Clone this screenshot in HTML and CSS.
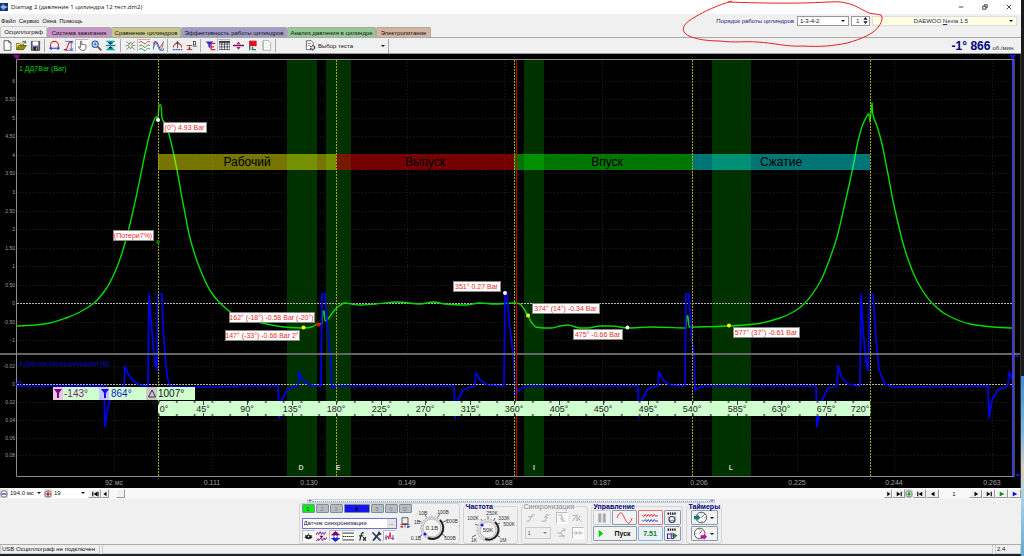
FILE: index.html
```html
<!DOCTYPE html>
<html lang="ru">
<head>
<meta charset="utf-8">
<title>Diamag 2</title>
<link rel="stylesheet" href="styles.css">
</head>
<body>
<div class="desktop">
<div class="app">
  <header class="titlebar">
    <svg class="logo" viewBox="0 0 16 16"><rect width="16" height="16" fill="#0a3480"/><path d="M1 8h14M4 5v6M6 2v12M8 4v9M10 6v5M12 7v2" stroke="#d5e8ff" stroke-width="1.4"/></svg>
    <span class="title">Diamag 2 (давление 1 цилиндра 12 тест.dm2)</span>
    <div class="winbtns">
      <button aria-label="Свернуть"><svg viewBox="0 0 8 8"><path d="M1 4h6"/></svg></button>
      <button aria-label="Окно"><svg viewBox="0 0 8 8"><path d="M1 3h4v4H1zM3 3V1h4v4H5"/></svg></button>
      <button aria-label="Закрыть"><svg viewBox="0 0 8 8"><path d="M1 1l6 6M7 1L1 7"/></svg></button>
    </div>
  </header>
  <div class="menubar">
    <nav class="menu"><button>Файл</button><button>Сервис</button><button>Окна</button><button>Помощь</button></nav>
    <div class="order">
      <label for="order">Порядок работы цилиндров</label>
      <div class="combo order-combo"><select id="order"><option>1-3-4-2</option></select></div>
      <div class="spin"><input id="cyl" value="1" aria-label="Номер цилиндра"><svg viewBox="0 0 6 10"><path d="M3 0l3 4H0zM3 10l3-4H0z"/></svg></div>
      <button class="car"><span>DAEWOO <u>N</u>exia 1.5</span><i class="caret"></i></button>
    </div>
  </div>
  <nav class="tabs">
    <button class="tab t1">Осциллограф</button><button class="tab t2">Система зажигания</button><button class="tab t3">Сравнение цилиндров</button><button class="tab t4">Эффективность работы цилиндров</button><button class="tab t5">Анализ давления в цилиндре</button><button class="tab t6">Электропитание</button>
  </nav>
  <div class="toolbar">
    <div class="tg">
      <button aria-label="Новый"><svg viewBox="0 0 16 16"><path d="M3 1h7l3 3v11H3zM10 1v3h3" fill="#fff" stroke="#222"/></svg></button>
      <button aria-label="Открыть"><svg viewBox="0 0 16 16"><path d="M1 14V5h4l1 1h5v3" fill="#ffe680" stroke="#4c4a00"/><path d="M1 14l3-6h11l-4 6z" fill="#998b00" stroke="#4c4a00"/><path d="M9 3q3-3 5 1M14 1v3h-3" fill="none" stroke="#222"/></svg></button>
      <button aria-label="Сохранить"><svg viewBox="0 0 16 16"><path d="M2 2h12v13H2z" fill="#7a78a8" stroke="#222"/><path d="M4 2h8v6H4z" fill="#fff"/><path d="M5 10h6v5H5z" fill="#222"/><path d="M9 11h1v3H9z" fill="#fff"/></svg></button>
    </div>
    <div class="tg">
      <button aria-label="Период"><svg viewBox="0 0 16 16"><path d="M2 11V8a6 6 0 0 1 12 0v3" fill="none" stroke="#e02020" stroke-width="1.5"/><path d="M1 12h14M4 10l-3 2 3 2M12 10l3 2-3 2" fill="none" stroke="#1030e0" stroke-width="1.4"/></svg></button>
      <button aria-label="Амплитуда"><svg viewBox="0 0 16 16"><path d="M1 14h4L9 3h5" fill="none" stroke="#e02020" stroke-width="1.5"/><path d="M12 3v11M10 5l2-3 2 3M10 12l2 3 2-3M3 2h12M3 15h12" fill="none" stroke="#3040c0"/></svg></button>
      <button class="on" aria-label="Рука"><svg viewBox="0 0 16 16"><path d="M5 10V2q1-1 2 0v5q1-1 2 0 1-1 2 0 2-1 2 1v4l-2 3H6L2 10q1-1 3 1z" fill="#fff" stroke="#333"/></svg></button>
      <button aria-label="Лупа"><svg viewBox="0 0 16 16"><circle cx="6" cy="6" r="4.5" fill="#bfe3ff" stroke="#2a5090" stroke-width="1.5"/><path d="M4 6h4M6 4v4" stroke="#1030e0"/><path d="M10 10l5 5" stroke="#705030" stroke-width="2.5"/></svg></button>
      <button aria-label="Сжать"><svg viewBox="0 0 16 16"><path d="M1 8h14" stroke="#008b8b" stroke-width="2"/><path d="M2 2h12M4 4h8M2 14h12M4 12h8" stroke="#00a5a5" stroke-width="2"/><path d="M8 7L5 4h6zM8 9l-3 3h6z" fill="#006"/></svg></button>
    </div>
    <div class="tg">
      <button aria-label="Маркер"><svg viewBox="0 0 16 16"><path d="M1 8h4l3-5 3 5h4M5 8l3 5 3-5" fill="none" stroke="#309030"/><path d="M2 2l4 4M14 2l-4 4M2 14l4-4M14 14l-4-4" stroke="#a04040"/></svg></button>
      <button class="on" aria-label="Каналы"><svg viewBox="0 0 16 16"><g fill="none" stroke-width="1.4"><path d="M0 4q3-4 6 0t5 0 5-1" stroke="#e03030"/><path d="M0 9q3-4 6 0t5 0 5-1" stroke="#309040"/><path d="M0 14q3-4 6 0t5 0 5-1" stroke="#30a060"/></g></svg></button>
      <button aria-label="Наложение"><svg viewBox="0 0 16 16"><g fill="none" stroke-width="1.4"><path d="M0 6q3-8 6 0t5 4 5-8" stroke="#e03030"/><path d="M0 14Q3-6 8 8t8 4" stroke="#3040e0"/><path d="M1 10q4-10 7 1t7-6" stroke="#609090"/></g></svg></button>
    </div>
    <div class="tg">
      <button aria-label="Авто"><svg viewBox="0 0 16 16"><path d="M2 11a6 6 0 1 1 12 0" fill="none" stroke="#d02030" stroke-width="1.5"/><path d="M8 2v10M5 5l3-3 3 3" fill="none" stroke="#222"/><path d="M1 14h14" stroke="#4060c0" stroke-width="2" stroke-dasharray="3 1"/></svg></button>
      <button aria-label="Ноль"><svg viewBox="0 0 16 16"><path d="M1 8h8M1 14h8" stroke="#c02020" stroke-width="1.3"/><path d="M5 9v4M3 11l2 2 2-2" fill="none" stroke="#222"/><rect x="11" y="2" width="3" height="5" fill="none" stroke="#222"/><path d="M10 9h6" stroke="#222"/></svg></button>
    </div>
    <div class="tg">
      <button aria-label="Фильтр"><svg viewBox="0 0 16 16"><path d="M1 2h11L8 7v5L5 10V7z" fill="#2030e0"/><path d="M15 5H9v9h6M9 10h4" fill="none" stroke="#e02030" stroke-width="1.7"/></svg></button>
      <button class="on" aria-label="Таблица"><svg viewBox="0 0 16 16"><path d="M0 2h16v12H0zM0 6h16M0 10h16M4 2v12M8 2v12M12 2v12" fill="#fff" stroke="#223"/><path d="M0 2h16v2H0z" fill="#223"/></svg></button>
      <button aria-label="Делитель"><svg viewBox="0 0 16 16"><path d="M0 8h16" stroke="#800060" stroke-width="2"/><path d="M8 2l3 4H5zM8 14l3-4H5z" fill="#903070"/></svg></button>
      <button aria-label="Флаг"><svg viewBox="0 0 16 16"><path d="M4 1v14" stroke="#333" stroke-width="1.5"/><path d="M4 1h10v8H4z" fill="#e01020"/><path d="M8 10v4h5" stroke="#208030" stroke-width="2" fill="none"/></svg></button>
      <button disabled aria-label="Отчёт"><svg viewBox="0 0 16 16"><path d="M3 1h8l3 3v11H3zM3 1v14" fill="#fff" stroke="#999"/><path d="M6 5h5M6 8h5M6 11h5" stroke="#bbb" stroke-dasharray="1 1"/></svg></button>
    </div>
    <button class="test"><svg viewBox="0 0 16 16"><path d="M2 1h7l3 3v10H2z" fill="#fff" stroke="#333"/><path d="M4 5h5M4 8h3" stroke="#555"/><circle cx="11" cy="11" r="3" fill="#ddd" stroke="#333" stroke-width="1.8" stroke-dasharray="2 1"/></svg><span>Выбор теста</span><i class="caret"></i></button>
    <div class="rpm"><b>-1° 866</b><span>об./мин.</span></div>
  </div>

  <svg class="chart" viewBox="0 54 1021 434" role="img" aria-label="Осциллограмма давления">
    <rect y="54" width="1021" height="434" fill="#000"/>
    <g fill="#003200"><path d="M287 60h30v416h-30zM326 60h25v416h-25zM524 60h20v416h-20zM712 60h39v416h-39z"/></g>
    <g id="grid" class="grid"></g>
    <path d="M17 303.500H1013M17 384.500H1013" class="zero"/>
    <path id="green" class="wave green"/>
    <g class="strokes">
      <path d="M158 154h178v16H158z" fill="#ff0"/><path d="M336 154h178v16H336z" fill="#f00"/><path d="M514 154h178v16H514z" fill="#0f0"/><path d="M692 154h178v16H692z" fill="#0ff"/>
    </g>
    <g class="stroke-names"><text x="247" y="166">Рабочий</text><text x="425" y="166">Выпуск</text><text x="607" y="166">Впуск</text><text x="781" y="166">Сжатие</text></g>
    <path id="blue" class="wave blue"/>
    <path d="M0 354H1020" stroke="#666" stroke-width="2"/>
    <path d="M158.500 60V476M336.500 60V476M514.500 60V476M692.500 60V476M870.500 60V476" class="phase"/>
    <path d="M516.500 60V476" stroke="#c80000"/>
    <path d="M16.500 476.500V59.500H1014M16.500 476.500H1014V59" fill="none" stroke="#8c8c8c"/>
    <path d="M1013 60V476" stroke="#3c3cd2" stroke-width="2"/>
    <path d="M1020.500 54V488" stroke="#333"/>
    <path d="M13 55h7l-3 5z" fill="#900090"/><path d="M1009 55h7l-3 5zM1015 357l2-3 2 3zM1015 474h5l-2 3z" fill="#1010f0"/>
    <circle cx="19" cy="384" r="2.500" fill="none" stroke="#1010f0"/>
    <text x="19" y="71" class="ch" fill="#00d000">1 ДД7Bar (Bar)</text>
    <text x="19" y="366" class="ch" fill="#0000c8">4 Датчик синхронизации (В)</text>
    <g id="ylabels" class="ylab"></g>
    <g id="xlabels" class="xlab"></g>
    <g class="events"><text x="301" y="470">D</text><text x="338" y="470">E</text><text x="534" y="470">I</text><text x="731" y="470">L</text></g>
    <rect x="158" y="401" width="712" height="15" fill="#cfffcf"/>
    <path d="M158 402H870M158 415H870" pathLength="720" class="ticks"/>
    <path id="majors" class="majors"/>
    <g id="degrees" class="deg"></g>
    <g class="cursor">
      <path d="M53 387h142v13H53z" fill="#cfffcf"/><path d="M53 387h10v13H53z" fill="#e6c8e6"/><path d="M99 387h10v13H99z" fill="#c8c8ff"/><path d="M146 387h11v13h-11z" fill="#c8c8c8"/>
      <path d="M54 389h8l-3 4v5h-2v-5z" fill="#800080"/><path d="M101 389h8l-3 4v5h-2v-5z" fill="#1010f0"/><path d="M152 390l3.500 7h-7z" fill="none" stroke="#333"/>
      <text x="64" y="397" fill="#802080">-143°</text><text x="111" y="397" fill="#1818d8">864°</text><text x="158" y="397" fill="#111">1007°</text>
    </g>
    <g id="callouts" class="callouts"></g>
    <g><circle cx="158" cy="120" r="2" fill="#fff"/><circle cx="158" cy="242" r="2" fill="#007800"/><circle cx="303.500" cy="327.500" r="2" fill="#ff0"/><circle cx="318.500" cy="324.500" r="2" fill="#f00"/><circle cx="505" cy="293" r="2" fill="#fff"/><circle cx="528" cy="315.500" r="2" fill="#ff0"/><circle cx="627.500" cy="327.500" r="2" fill="#fff"/><circle cx="729" cy="325.500" r="2" fill="#ff0"/></g>
  </svg>

  <div class="navstrip">
    <button class="round" aria-label="Уменьшить"><svg viewBox="0 0 10 10"><circle cx="5" cy="5" r="4" fill="#fff" stroke="#555"/><path d="M2 5h6" stroke="#22b" stroke-width="1.500"/></svg></button>
    <div class="combo w36"><select aria-label="Развёртка"><option>194.0 мс</option></select></div>
    <button class="round" aria-label="Увеличить"><svg viewBox="0 0 10 10"><circle cx="5" cy="5" r="4" fill="#fff" stroke="#555"/><path d="M2 5h6M5 2v6" stroke="#a00" stroke-width="1.500"/></svg></button>
    <div class="combo w36"><select aria-label="Кадр"><option>19</option></select></div>
    <button class="nb" aria-label="В начало"><svg viewBox="0 0 10 8"><path d="M2 1v6M9 1v6" stroke="#000" stroke-width="1.500"/><path d="M8 1v6L3 4z"/></svg></button>
    <button class="nb small" aria-label="Назад"><svg viewBox="0 0 10 8"><path d="M7 1v6L3 4z"/></svg></button>
    <div class="track"><button class="thumb" aria-label="Прокрутка"></button></div>
    <button class="nb small" aria-label="Вперёд"><svg viewBox="0 0 10 8"><path d="M4 1v6l4-3z"/></svg></button>
    <button class="nb" aria-label="В конец"><svg viewBox="0 0 10 8"><path d="M8 1v6" stroke="#000" stroke-width="1.500"/><path d="M2 1v6l5-3z"/></svg></button>
    <button class="round" aria-label="Добавить"><svg viewBox="0 0 10 10"><circle cx="5" cy="5" r="4" fill="#fff" stroke="#666"/><path d="M2 5h6M5 2v6" stroke="#080" stroke-width="1.500"/></svg></button>
    <button class="nb" aria-label="Первый"><svg viewBox="0 0 10 8"><path d="M2 1v6" stroke="#000" stroke-width="1.500"/><path d="M8 1v6L3 4z"/></svg></button>
    <button class="nb" aria-label="Предыдущий"><svg viewBox="0 0 10 8"><path d="M7 1v6L2 4z"/></svg></button>
    <output class="page">1</output>
    <button class="nb" aria-label="Следующий"><svg viewBox="0 0 10 8"><path d="M3 1v6l5-3z"/></svg></button>
    <button class="nb" aria-label="Последний"><svg viewBox="0 0 10 8"><path d="M8 1v6" stroke="#000" stroke-width="1.500"/><path d="M2 1v6l5-3z"/></svg></button>
    <button class="nb" aria-label="Пуск"><svg viewBox="0 0 10 8"><path d="M2 1v6l6-3z" fill="#080"/></svg></button>
    <button class="nb" aria-label="Пуск 2"><svg viewBox="0 0 10 8"><path d="M2 1v6l6-3z" fill="#00f"/></svg></button>
  </div>

  <main class="panel">
    <div class="slider"><i></i><span></span><i></i></div>
    <div class="groups">
      <section class="group channels">
        <div class="chan-left">
          <div class="chtabs"><button class="c1">1</button><button>2</button><button>3</button><button class="c4">4</button><button>5</button><button>6</button><button>D</button></div>
          <div class="sensor"><div class="sensor-box"><input value="Датчик синхронизации" aria-label="Датчик"><button aria-label="Выбрать">...</button></div>
            <svg class="ic" viewBox="0 0 16 16"><path d="M4 1h8v8H4z" fill="#eee" stroke="#333"/><path d="M2 10h12M8 9v5" stroke="#333"/><path d="M5 11l-4 2 4 2z" fill="#e02020"/><path d="M11 11l4 2-4 2z" fill="#1030e0"/></svg></div>
          <div class="icons">
            <button class="on" aria-label="Видимость"><svg viewBox="0 0 16 16"><path d="M2 9q6-8 12 0-6 6-12 0" fill="#222"/><circle cx="8" cy="8" r="1.200" fill="#fff"/><path d="M3 6l2 1M13 6l-2 1M8 3v2" stroke="#222"/></svg></button>
            <button aria-label="Фильтр"><svg viewBox="0 0 16 16"><path d="M0 6l2-4 2 3 2-4 2 4 2-3 2 3 2-4M0 15l3-4 1 3 4-5 1 5 3-4 1 3 3-4" fill="none" stroke="#902090" stroke-width="1.400"/><path d="M5 7h6L8 10z" fill="#225"/></svg></button>
            <button class="on" aria-label="Масштаб"><svg viewBox="0 0 16 16"><path d="M8 0l7 6h-4v2H5V6H1z" fill="#800070"/><path d="M8 16l-7-6h4V8h6v2h4z" fill="#2020e0"/><circle cx="8" cy="8" r="2" fill="#fff"/></svg></button>
            <button class="on" aria-label="Линии"><svg viewBox="0 0 16 16"><path d="M0 3h16M0 13h16" stroke="#222" stroke-width="1.300"/><path d="M0 8h16" stroke="#222" stroke-width="1.500" stroke-dasharray="2 1"/></svg></button>
            <button aria-label="Функция"><svg viewBox="0 0 16 16"><path d="M10 3q-3-2-4 3L4 14M3 7h6M9 9l4 5M13 9l-4 5" fill="none" stroke="#222" stroke-width="1.800"/></svg></button>
            <button aria-label="Настройка"><svg viewBox="0 0 16 16"><path d="M2 2l12 12" stroke="#3050a0" stroke-width="2.500"/><path d="M13 2L3 14" stroke="#333" stroke-width="2.500"/><path d="M11 1l1 4 3-1" fill="none" stroke="#333" stroke-width="2"/></svg></button>
            <button class="on" aria-label="Импульс"><svg viewBox="0 0 16 16"><path d="M1 10h3l2-3 1 5 2-10 1 9h5" fill="none" stroke="#e02030" stroke-width="1.300"/><path d="M3 6v7M13 6v7" stroke="#3040d0" stroke-width="1.400"/></svg></button>
          </div>
        </div>
        <svg class="knob k1" viewBox="0 0 50 38">
          <path d="M11 31l-3 2M8 17l4 2M14 11l3 4M29 10l-3 4M32 18l5-2M31 30l4 3" stroke="#666"/>
          <circle cx="21" cy="24" r="12" fill="#ddd"/><circle cx="21" cy="24" r="11" fill="none" stroke="#888" stroke-dasharray="1 2"/><circle cx="21" cy="24" r="9" fill="#f4f4f4" stroke="#bbb"/><path d="M29 16a11 11 0 0 1-12 18" fill="none" stroke="#222" stroke-width="2"/><circle cx="14" cy="30" r="1.500" fill="#11f"/>
          <text x="21" y="26" class="kv">0.1В</text><text x="5" y="36">0.1В</text><text x="6" y="20">1В</text><text x="12" y="11">10В</text><text x="32" y="10">100В</text><text x="41" y="19">200В</text><text x="39" y="36">500В</text>
        </svg>
      </section>
      <fieldset class="group freq"><legend>Частота</legend>
        <svg class="knob k2" viewBox="0 0 52 34">
          <path d="M12 25l-4 2M11 14l4 2M17 9l2 3M24 6v5M31 8l-2 4M36 13l-4 2M32 25l4 2" stroke="#666"/>
          <circle cx="24" cy="20" r="11" fill="#ddd"/><circle cx="24" cy="20" r="11" fill="none" stroke="#888" stroke-dasharray="1 2"/><circle cx="24" cy="20" r="8" fill="#f4f4f4" stroke="#bbb"/><path d="M31 12a10 10 0 0 1-10 17" fill="none" stroke="#222" stroke-width="2"/><circle cx="18" cy="15" r="1.500" fill="#11f"/>
          <text x="24" y="22" class="kv">50K</text><text x="9" y="10">100K</text><text x="28" y="5">250K</text><text x="40" y="10">333K</text><text x="45" y="16">500K</text><text x="10" y="32">1K</text><text x="39" y="32">1M</text>
        </svg>
      </fieldset>
      <fieldset class="group sync" disabled><legend>Синхронизация</legend>
        <div class="row">
          <button aria-label="Режим 1"><svg viewBox="0 0 16 16"><path d="M1 13h4L10 3h4M3 6h8"/></svg></button><button aria-label="Фронт"><svg viewBox="0 0 16 16"><path d="M1 13h7V3h6M5 8l3-3 3 3"/></svg></button><button class="on" aria-label="Спад"><svg viewBox="0 0 16 16"><path d="M2 3h6v10h6M5 8l3 3 3-3"/></svg></button><button aria-label="Авто"><svg viewBox="0 0 16 16"><path d="M1 13L8 3v10l5-9M1 4h5M10 8l5 6"/></svg></button>
        </div>
        <div class="row"><div class="combo sync-combo"><select aria-label="Канал"><option>1</option></select></div><button aria-label="Связь"><svg viewBox="0 0 16 16"><path d="M2 8h6M8 8q0-5 6-5M8 8q0 5 6 5M12 1l3 2-3 2M4 13h9"/></svg></button><button class="on" aria-label="Сжать"><svg viewBox="0 0 16 16"><path d="M0 8h7M9 8h7M4 5l3 3-3 3M12 5L9 8l3 3"/></svg></button></div>
      </fieldset>
      <fieldset class="group ctrl"><legend>Управление</legend>
        <div class="ctrl-grid">
          <button class="dis" aria-label="Пауза"><svg viewBox="0 0 16 16"><path d="M3 2h4v12H3zM9 2h4v12H9z" fill="#aaa"/></svg></button>
          <button aria-label="Синус"><svg viewBox="0 0 24 16" class="wide"><path d="M2 8C7-4 9 2 12 8s6 12 10 0" fill="none" stroke="#e03030" stroke-width="1.300"/></svg></button>
          <button class="red" aria-label="Каналы"><svg viewBox="0 0 24 16" class="wide"><path d="M1 4l2 2 2-3 2 3 2-3 2 3 2-3 2 3 2-3 2 3 3-2" fill="none" stroke="#e03030" stroke-width="1.300"/><path d="M1 12h2l2-2 2 3 2-3 2 3 2-3 2 3 2-3 2 2h3" fill="none" stroke="#3040e0" stroke-width="1.300"/></svg></button>
          <button aria-label="Авто"><svg viewBox="0 0 16 16"><path d="M2 2h12" stroke="#222" stroke-width="3" stroke-dasharray="2 1"/><circle cx="8" cy="10" r="4" fill="#fff" stroke="#335" stroke-width="1.500"/><path d="M3 6l2 2M13 6l-2 2M5 11h6" stroke="#34b"/></svg></button>
          <button class="start"><svg viewBox="0 0 8 10"><path d="M1 0v10l6-5z" fill="#00d000"/></svg><b>Пуск</b></button>
          <output>7.51</output>
          <button aria-label="Авто 2"><svg viewBox="0 0 16 16"><path d="M2 2h12" stroke="#222" stroke-width="3" stroke-dasharray="2 1"/><path d="M5 14H2V8h5v6h3V7" fill="none" stroke="#23b" stroke-width="1.400"/><path d="M8 12V6" stroke="#d22" stroke-width="1.500"/><path d="M11 7l4 3-4 4z" fill="#080"/></svg></button>
        </div>
      </fieldset>
      <fieldset class="group timers"><legend>Таймеры</legend>
        <button aria-label="Таймер 1"><svg viewBox="0 0 16 16"><circle cx="9" cy="8" r="6.500" fill="#fff" stroke="#333"/><path d="M9 8l4-4M9 3v1M14 8h-1M9 13v-1" stroke="#333"/><path d="M0 6h4V4l4 4-4 4v-2H0z" fill="#187878"/></svg><i class="caret"></i></button>
        <button aria-label="Таймер 2"><svg viewBox="0 0 16 16"><circle cx="7" cy="8" r="6.500" fill="#fff" stroke="#333"/><path d="M7 8l3-4M7 3v1M2 8h1" stroke="#333"/><path d="M8 10h4V8l4 4-4 4v-2H8z" fill="#c010a0"/></svg><i class="caret"></i></button>
      </fieldset>
    </div>
  </main>
  <footer class="status"><span class="s1">USB Осциллограф не подключен</span><span class="s2"></span><span class="s3">2.4</span></footer>
  <div class="taskbar"></div>
</div>
<div class="edge"></div>
<svg class="mark" viewBox="680 0 206 50"><path d="M732 1C718 5 703 12 695 17 684 23 682 28 684 32 688 38 704 41 720 41 735 43 745 41 757 42 775 43 787 47 803 46 819 47 833 46 847 43 862 39 875 33 879 26 882 22 883 17 881 15 878 14 873 14 869 13 860 9 856 5 846 3 839 1 833 2 827 2 798 4 755 3 728 2"/></svg>
</div>
<script src="chart.js"></script>
</body>
</html>
```
FILE: styles.css
```css
* { box-sizing: border-box; }
body { margin: 0; background: #f0f0f0; font: 6px/8px "Liberation Sans", Arial, sans-serif; color: #111; }
button, input, select, output { font: inherit; color: inherit; margin: 0; padding: 0; border: 0; background: none; }
button { display: flex; align-items: center; justify-content: center; white-space: nowrap; }
fieldset { margin: 0; min-width: 0; }
.desktop { position: relative; display: grid; grid-template-columns: 1fr 3px; }
.app { display: flex; flex-direction: column; min-width: 0; }
.edge { background: linear-gradient(#1a1a1a 376px, #3c8cd8 376px, #7db4dc 430px, #d8cfc4 470px, #a8cfe8 500px, #5fa8d0); }
.mark { position: absolute; top: 0; right: 138px; width: 206px; height: 50px; fill: none; stroke: #e82020; stroke-width: 1; pointer-events: none; }
.caret { width: 0; height: 0; border: 2px solid transparent; border-top-color: #111; border-bottom: 0; }

.titlebar { display: flex; align-items: center; height: 14px; background: #fff; }
.logo { width: 8px; height: 8px; margin-right: 3px; }
.title { font: 6px/8px "Open Sans", sans-serif; }
.winbtns { display: flex; gap: 16px; margin-left: auto; padding-right: 8px; }
.winbtns button { width: 8px; height: 8px; }
.winbtns svg { width: 6px; height: 6px; fill: none; stroke: #111; }

.menubar { display: flex; justify-content: space-between; height: 13px; }
.menu { display: flex; gap: 3px; padding: 2px 1px; }
.order { display: flex; align-items: center; padding-right: 4px; color: #222288; }
.order label { margin-right: 3px; }
.combo { position: relative; background: #fff; border: 1px solid #999; height: 10px; }
.combo select { appearance: none; width: 100%; height: 8px; padding-left: 2px; display: block; color: #111; }
.combo::after { content: ""; position: absolute; right: 3px; top: 3px; border: 2px solid transparent; border-top-color: #111; border-bottom: 0; }
.order-combo { width: 52px; margin-right: 2px; }
.spin { display: flex; align-items: center; width: 19px; height: 10px; margin-right: 2px; background: #fff; border: 1px solid #999; }
.spin input { width: 11px; padding-left: 4px; }
.spin svg { width: 5px; height: 7px; fill: #111; }
.car { width: 145px; height: 10px; background: #ffffe1; border: 1px solid #ddd; padding-right: 3px; }
.car span { flex: 1; }

.tabs { display: flex; align-items: flex-end; height: 11px; border-bottom: 1px solid #aaa; }
.tab { height: 10px; border: 1px solid #aaa; border-bottom: 0; border-radius: 2px 2px 0 0; }
.t1 { width: 47px; height: 11px; background: #f0f0f0; border-color: #ccc; }
.t2 { width: 64px; background: #c896c8; }
.t3 { width: 70px; background: #c8c88c; }
.t4 { width: 106px; background: #a09cc8; }
.t5 { width: 89px; background: #96c896; }
.t6 { width: 55px; background: #d2b4a0; }

.toolbar { display: flex; align-items: center; height: 16px; border-bottom: 1px solid #999; }
.tg { display: flex; padding-right: 2px; margin-right: 2px; border-right: 1px solid #aaa; }
.tg button { width: 14px; height: 13px; }
.tg svg, .test svg { width: 11px; height: 11px; flex: none; }
.tg button.on, .icons .on, .sync .on { background: #fafafa; border: 1px solid; border-color: #bbb #fff #fff #bbb; }
.tg:nth-child(2) { padding-right: 3px; }
.test { width: 84px; height: 14px; margin-left: 27px; gap: 2px; border-right: 1px solid #aaa; padding-right: 3px; }
.test .caret { margin-left: auto; }
.rpm { display: flex; align-items: baseline; gap: 2px; margin-left: auto; padding-right: 6px; color: #333; }
.rpm b { font-size: 12px; line-height: 14px; color: #000080; }

.chart { display: block; width: 100%; height: auto; }
.chart text { font-family: "Liberation Sans", Arial, sans-serif; }
.grid path { fill: none; stroke: #222200; stroke-dasharray: 1 2; }
.zero { stroke: #b8b8b8; stroke-dasharray: 2 1; }
.wave { fill: none; stroke-width: 1.4; stroke-linejoin: round; }
.green { stroke: #00dc00; }
.blue { stroke: #0000f5; stroke-width: 1.7; }
.phase { stroke: #a8a800; stroke-dasharray: 2 1; }
.strokes { opacity: .46; }
.stroke-names text { font-size: 12px; text-anchor: middle; }
.ch { font-size: 7px; }
.ylab { font-size: 5px; fill: #a0a0a0; text-anchor: end; }
.xlab { font-size: 7px; fill: #a0a0a0; text-anchor: middle; }
.events { font-size: 7px; font-weight: bold; fill: #c8d8c8; text-anchor: middle; }
.ticks { stroke: #667766; stroke-width: 2; stroke-dasharray: 1 8; }
.majors { stroke: #334433; stroke-width: 1; }
.deg { font-size: 9px; fill: #222; text-anchor: middle; }
.cursor text { font-size: 10px; }
.callouts rect { fill: #fff; stroke: #888; shape-rendering: crispEdges; }
.callouts text { font-size: 7px; fill: #f02828; text-anchor: middle; }

.navstrip { display: flex; align-items: center; height: 11px; background: #f8f8f8; }
.round { width: 8px; height: 9px; background: #ddd; }
.round svg { width: 8px; height: 8px; }
.navstrip .combo { border: 0; height: 9px; }
.w36 { width: 36px; }
.nb { width: 13px; height: 9px; background: #f0f0f0; border: 1px solid; border-color: #fff #999 #999 #fff; }
.nb.small { width: 8px; }
.nb svg { width: 8px; height: 6px; flex: none; }
.track { flex: 1; padding-left: 7px; }
.thumb { width: 9px; height: 9px; background: #f0f0f0; border: 1px solid; border-color: #fff #999 #999 #fff; }
.page { width: 30px; text-align: center; }

.panel { display: flex; flex-direction: column; align-items: center; height: 46px; border-bottom: 1px solid #aaa; }
.slider { display: flex; align-items: center; width: 408px; height: 4px; border: 1px solid #ccc; }
.slider span { flex: 1; border-top: 1px dotted #6aaedc; }
.slider i { width: 4px; border: 2px solid transparent; border-top-color: #2a86c8; border-bottom: 0; }
.groups { display: flex; align-items: stretch; gap: 3px; width: 424px; height: 41px; }
.group { border: 1px solid #d4d4d4; border-radius: 3px; padding: 0; flex: none; }
.group legend { margin-left: 1px; padding: 0 1px; height: 7px; line-height: 7px; font-size: 7px; font-weight: bold; color: #000080; }
.channels { display: flex; width: 161px; }
.chan-left { width: 111px; padding-left: 2px; }
.chtabs { display: flex; gap: 1px; width: 112px; }
.chtabs button { width: 13px; height: 9px; background: #b8bcc0; border: 1px solid #7890a0; border-radius: 1px; color: #808488; }
.chtabs .c1 { background: #10e818; color: #042; }
.chtabs .c4 { width: 26px; background: #1414f0; color: #000; font-weight: bold; }
.sensor { display: flex; align-items: center; gap: 2px; margin-top: 4px; }
.sensor-box { display: flex; width: 95px; height: 11px; background: #fff; border: 1px solid #7070e0; }
.sensor-box input { flex: 1; min-width: 0; padding-left: 1px; }
.sensor-box button { width: 9px; background: #e4e4e4; }
.ic { width: 12px; height: 12px; }
.icons { display: flex; justify-content: space-between; width: 95px; margin-top: 1px; }
.icons button { width: 13px; height: 12px; }
.icons svg { width: 11px; height: 11px; flex: none; }
.knob { display: block; fill: none; overflow: visible; }
.knob text { font-size: 5px; fill: #333; text-anchor: middle; }
.knob .kv { font-size: 6px; }
.k1 { width: 50px; height: 38px; flex: none; }
.k2 { width: 52px; height: 34px; }
.freq { width: 55px; }
.sync { width: 67px; }
.group.sync legend { color: #888; font-weight: normal; }
.row { display: flex; align-items: center; justify-content: space-between; height: 15px; padding: 0 3px; }
.row button { width: 12px; height: 12px; }
.row svg { width: 10px; height: 10px; flex: none; fill: none; stroke: #aaa; stroke-width: 1.4; }
.sync-combo { width: 26px; height: 12px; background: #eee; border-color: #ccc; }
.sync-combo select { height: 10px; color: #666; opacity: 1; }
.sync-combo::after { top: 4px; border-top-color: #888; }
.ctrl { width: 92px; }
.ctrl-grid { display: grid; grid-template-columns: 18px 25px 25px 17px; grid-auto-rows: 15px; gap: 1px; padding: 0 1px; }
.ctrl-grid button, .ctrl-grid output, .timers button { background: #f2f2f2; border: 1px solid #8a9cac; border-radius: 1px; }
.ctrl-grid .dis { border-color: #ccc; }
.ctrl-grid .red { border-color: #f07070; }
.ctrl-grid svg { width: 12px; height: 12px; flex: none; }
.ctrl-grid .wide { width: 19px; height: 12px; }
.ctrl-grid .start { grid-column: span 2; gap: 10px; font-size: 7px; }
.ctrl-grid .start svg { width: 6px; height: 9px; }
.ctrl-grid output { display: flex; align-items: center; justify-content: center; font-size: 7px; font-weight: bold; color: #108010; border-color: #8cb4e0; background: #e8f0f8; }
.timers { width: 36px; }
.timers button { width: 27px; height: 15px; margin: 0 0 1px 4px; gap: 3px; }
.timers svg { width: 13px; height: 13px; flex: none; }

.status { display: flex; gap: 2px; height: 9px; }
.status span { border: 1px solid #ccc; border-top: 0; padding-left: 1px; }
.s1 { width: 100px; }
.s2 { flex: 1; }
.s3 { width: 26px; }
.taskbar { height: 2px; background: #1c2430; }
```
FILE: chart.js
```js
const NS = "http://www.w3.org/2000/svg";
const add = (id, tag, attrs, text) => {
  const el = document.createElementNS(NS, tag);
  for (const k in attrs) el.setAttribute(k, attrs[k]);
  if (text) el.textContent = text;
  document.getElementById(id).append(el);
};

// Vertical scales of both channels
const pressure = [["6", 81], ["5.50", 99], ["5", 118], ["4.50", 136], ["4", 155], ["3.50", 173], ["3", 192], ["2.50", 211], ["2", 229], ["1.50", 248], ["1", 266], ["0.50", 285], ["0", 303], ["-0.50", 322], ["-1", 340]];
const sensor = [["-0.02", 366], ["0", 384], ["0.02", 402], ["0.04", 420], ["0.06", 438], ["0.08", 455]];
for (const [t, y] of [...pressure, ...sensor]) {
  add("ylabels", "text", { x: 15, y: y + 2 }, t);
  add("grid", "path", { d: `M17 ${y}.5H1013` });
}

// Time axis
["92 мс", "0.111", "0.130", "0.149", "0.168", "0.187", "0.206", "0.225", "0.244", "0.263"].forEach((t, i) => {
  const x = Math.round(114 + i * 97.5);
  add("xlabels", "text", { x, y: 485 }, t);
  add("grid", "path", { d: `M${x}.5 60V476` });
});

// Crank angle ruler
const majors = [];
for (let a = 0; a <= 720; a += 45) {
  const x = Math.round(158 + a * 712 / 720);
  add("degrees", "text", { x: a === 0 ? 164 : a === 720 ? 860 : x, y: 412 }, a + "°");
  majors.push(`M${x}.5 401v4m0 8v3`);
}
document.getElementById("majors").setAttribute("d", majors.join(""));

// Measurement callouts: x, y, width, text
for (const [x, y, w, t] of [
  [163, 122, 43, "(0°) 4.93 Bar"], [113, 230, 40, "(Потери7%)"],
  [229, 312, 85, "162° (-18°) -0.58 Bar (-20°)"], [225, 330, 74, "147° (-33°) -0.66 Bar 2°"],
  [453, 281, 47, "351° 0.27 Bar"], [532, 303, 67, "374° (14°) -0.34 Bar"],
  [573, 329, 49, "475° -0.66 Bar"], [733, 327, 66, "577° (37°) -0.61 Bar"]]) {
  add("callouts", "rect", { x, y, width: w, height: 10 });
  add("callouts", "text", { x: x + w / 2, y: y + 8 }, t);
}

// Monotone cubic through x,y pairs
function smooth(p, first) {
  const n = p.length, s = [], m = [];
  for (let i = 0; i < n - 1; i++) s[i] = (p[i + 1][1] - p[i][1]) / (p[i + 1][0] - p[i][0]);
  for (let i = 0; i < n; i++) {
    if (i === 0) m[i] = s[0];
    else if (i === n - 1) m[i] = s[n - 2];
    else m[i] = s[i - 1] * s[i] <= 0 ? 0 : 2 * s[i - 1] * s[i] / (s[i - 1] + s[i]);
  }
  let d = (first ? "M" : "L") + p[0];
  for (let i = 0; i < n - 1; i++) {
    const h = (p[i + 1][0] - p[i][0]) / 3;
    d += `C${p[i][0] + h} ${p[i][1] + m[i] * h} ${p[i + 1][0] - h} ${p[i + 1][1] - m[i + 1] * h} ${p[i + 1]}`;
  }
  return d;
}
const parse = s => s.trim().split(/\s+/).map(q => q.split(",").map(Number));

const green = [
  "17,326 35,325 50,323 66,318 80,312 94,303 106,289 115,272 122,253 129,228 137,193 147,145 152,126 156,117 158,119",
  "159,105 161,105 162,118 166,125 170,138 176,165 183,203 190,238 200,269 211,292 220,303 232,313 245,319 262,323 285,327 304,328 312,327 318,324 322,324",
  "323,311 324,311 325,321 327,320 333,312 339,306 345,303 352,304 360,305 375,304 398,302 420,304 433,302 445,304 465,305 480,303 495,304 515,303 520,304 524,309 528,316 532,323 536,327 545,328 552,328 560,326 568,325 580,328 588,328 600,326 612,326 628,328 650,327 686,328",
  "687,316 688,316 689,327 729,326 755,324 780,318 795,311 805,303 820,282 830,258 837,237 845,203 853,167 858,141 863,124 868,114",
  "869,114 870,122", "872,103 873,115 877,126 882,144 887,169 895,210 905,250 917,281 932,303 947,315 970,324 993,327 1013,328"];
document.getElementById("green").setAttribute("d", green.map((s, i) => smooth(parse(s), i === 0)).join(""));

const blue = `17,386 60,386 104,386 105,427 107,412 110,400 114,392 124,386 125,366 128,374 133,381 140,385 148,386 149,294 153,345 155,362 157,370 158,294 162,294 163,325 165,355 167,376 170,386 180,387 215,387 240,386 278,386 279,418 282,400 287,390 294,387 298,386 299,372 302,379 308,384 314,386 321,386 322,294 325,294 328,335 331,360 332,388 337,386
454,386 455,418 458,400 463,390 470,387 475,386 476,373 480,380 488,385 504,386 505,293 507,293 509,320 512,345 514,362 515,395 517,392 522,388 530,386 638,386 639,417 642,400 647,390 652,387 658,386 659,372 663,380 670,385 685,386 686,294 689,294 691,330 694,355 695,391 698,388 705,386
816,386 817,427 822,400 828,388 837,386 838,366 842,378 848,384 860,386 861,294 863,330 866,362 868,371 870,294 873,294 875,325 877,350 879,370 885,384 892,387 988,386 989,418 992,400 998,390 1008,386 1009,372 1013,380`;
document.getElementById("blue").setAttribute("d", "M" + parse(blue).join("L"));
```
